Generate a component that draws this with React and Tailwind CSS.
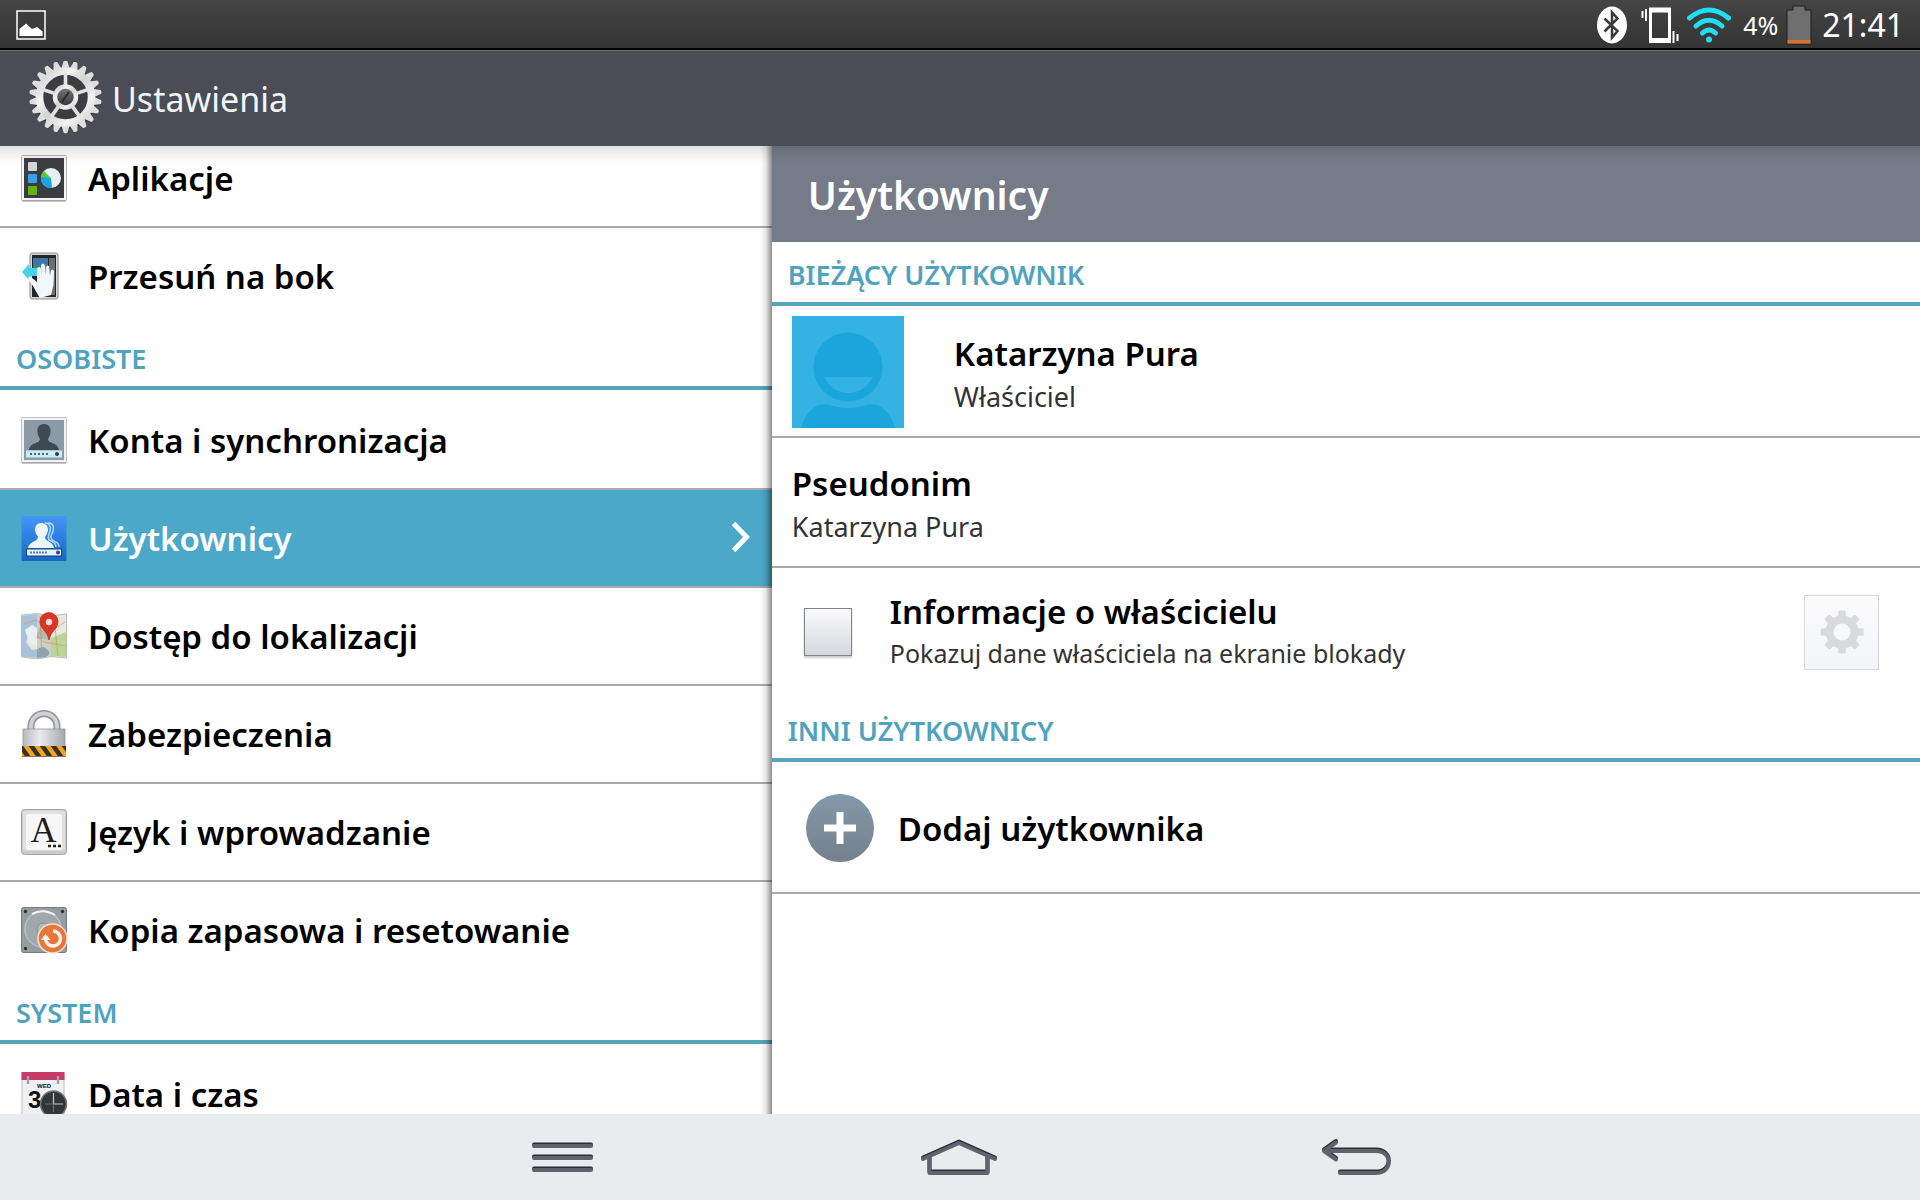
const HEADER_TEETH = Array.from({ length: 22 }, (_, i) => (i * 360) / 22)
const SPOKES = [0, 72, 144, 216, 288]
const SMALL_TEETH = [0, 45, 90, 135, 180, 225, 270, 315]

function SettingsLogo() {
  return (
    <svg className="w-19 h-19 shrink-0" viewBox="0 0 76 76" aria-hidden="true">
      <defs>
        <linearGradient id="metal" x1="0" y1="0" x2="1" y2="1">
          <stop offset="0" stopColor="#c9c9c9" />
          <stop offset="0.3" stopColor="#f4f4f4" />
          <stop offset="0.5" stopColor="#d2d2d2" />
          <stop offset="0.75" stopColor="#f2f2f2" />
          <stop offset="1" stopColor="#d0d0d0" />
        </linearGradient>
        <linearGradient id="screw" x1="0" y1="0" x2="0" y2="1">
          <stop offset="0" stopColor="#7b7b7b" />
          <stop offset="1" stopColor="#333333" />
        </linearGradient>
      </defs>
      <circle cx="37.5" cy="37.5" r="31" fill="#24262a" opacity="0.5" />
      <g fill="#25272b" opacity="0.5">
        {HEADER_TEETH.map((a) => (
          <path key={a} d="M33 12L35.6 1.5Q37.5 .5 39.4 1.5L42 12Z" transform={`translate(0 1.5) rotate(${a} 37.5 36)`} />
        ))}
      </g>
      <g fill="#dedede">
        {HEADER_TEETH.map((a) => (
          <path key={a} d="M32.6 10L35.6 .2Q37.5 -1 39.4 .2L42.4 10Z" transform={`rotate(${a} 37.5 36)`} />
        ))}
      </g>
      <circle cx="37.5" cy="36" r="26" fill="#3c3d40" />
      <circle cx="37.5" cy="36" r="26" fill="none" stroke="url(#metal)" strokeWidth="7.5" />
      <g fill="#e2e2e2">
        {SPOKES.map((a) => (
          <rect key={a} x="35.7" y="12" width="3.6" height="14" transform={`rotate(${a} 37.5 36)`} />
        ))}
      </g>
      <circle cx="37.5" cy="36" r="10.5" fill="url(#screw)" stroke="url(#metal)" strokeWidth="4.5" />
      <path d="M34 41L41 31" stroke="#2b2b2b" strokeWidth="2" />
    </svg>
  )
}

function AppsIcon() {
  return (
    <>
      <rect x="1.5" y="1.5" width="45" height="45" rx="1" fill="#f4f4f4" stroke="#b5b5b5" />
      <path d="M2 47h44" stroke="#8f8f8f" />
      <rect x="4" y="4" width="40" height="40" fill="#3b3c3f" />
      <rect x="8" y="8" width="9" height="9" rx="1" fill="#d3d3d8" />
      <rect x="8" y="20" width="9" height="9" rx="1" fill="#35a3ea" />
      <rect x="8" y="32" width="9" height="9" rx="1" fill="#66b010" />
      <circle cx="31" cy="24" r="10" fill="#e9f0f3" />
      <path d="M31 24L21 22A10 10 0 0 0 32 34Z" fill="#1ba3e4" />
      <path d="M31 24L21 23Q21.5 19 24 17Z" fill="#5cc83a" />
    </>
  )
}

function SlideIcon() {
  return (
    <>
      <rect x="10" y="1" width="28" height="46" rx="2" fill="#d5d5d5" stroke="#8c8c8c" />
      <rect x="12" y="3" width="24" height="42" fill="#232527" />
      <path d="M13 6h15v9H13z" fill="#3d77a8" />
      <path d="M13 15h15v8H13z" fill="#4c8a3c" />
      <path d="M29 6h6v37h-6z" fill="#6d6f72" />
      <path d="M2 20L9 12V16H19V24H9V28Z" fill="#45d3ee" />
      <path
        d="M18 43L13 34L8 27Q8 24 11 25L17 30L17 18Q17 15 19 15Q21 15 21 18L21.5 24L21 14Q21 11.5 23 11.5Q25 12 25 14L26 23L26 15Q27 12.5 29 14L30 24L31 18Q33 16.5 34 19L33.5 33L31 43L20 46Z"
        fill="#f1f8fa"
      />
    </>
  )
}

function AccountIcon() {
  return (
    <>
      <rect x="1.5" y="1.5" width="45" height="45" rx="1" fill="#f1f1f1" stroke="#c2c2c2" />
      <path d="M2 47h44" stroke="#8f8f8f" />
      <rect x="4" y="4" width="40" height="40" fill="#8b9ba5" />
      <path
        d="M24 8C19 8 17 12 17.5 16C17.5 19 19 21 20 23C20 28 10 26 9 34H39C38 26 28 28 28 23C29 21 30.5 19 30.5 16C31 12 29 8 24 8Z"
        fill="#3e4a52"
      />
      <rect x="6" y="34.5" width="36" height="7" fill="#c9edf7" />
      <path d="M10 38h18" stroke="#51626b" strokeWidth="2" strokeDasharray="2 2" />
      <circle cx="37" cy="38" r="2" fill="#2b3c46" />
    </>
  )
}

function UsersIcon() {
  return (
    <>
      <defs>
        <linearGradient id="usersBg" x1="0" y1="0" x2="0" y2="1">
          <stop offset="0" stopColor="#4296f8" />
          <stop offset="1" stopColor="#1768c4" />
        </linearGradient>
      </defs>
      <rect x="1.5" y="2" width="45" height="45" rx="1" fill="url(#usersBg)" />
      <g fill="none" stroke="#b9d6f8" strokeWidth="1.5">
        <path d="M25 9C30 9 31 13 30 17C29 21 27 23 29 26C33 28 36 29 36 33" />
        <path d="M28 9C34 9 34 14 33 17C31 22 30 23 32 26C36 28 39 29 39 33" />
      </g>
      <path
        d="M21 9C17 9 15 12 15 16C15 19 17 21 18 23C18 28 9 27 8 34H34C33 27 25 28 25 23C26 21 28 19 28 16C28 12 26 9 21 9Z"
        fill="#eaf7fb"
      />
      <rect x="6.5" y="35" width="35" height="7" fill="#e6f2fa" stroke="#123f78" />
      <path d="M10 38.5h17" stroke="#5f7da0" strokeWidth="2" strokeDasharray="2 1" />
      <circle cx="38" cy="38.5" r="2" fill="#274c77" />
    </>
  )
}

function MapIcon() {
  return (
    <>
      <path d="M1.5 3L17 1.5L31 4L46.5 2V46L31 44.5L17 47L1.5 45Z" fill="#eae8da" stroke="#bcbcb6" />
      <path d="M2 4L17 2V24L9 22L6 30L12 38L17 37V46L2 44.5Z" fill="#a9c2dc" />
      <path d="M5 18L12 13L17 16V34L9 30Z" fill="#e9eff2" />
      <path d="M17 2L31 5V44L17 46Z" fill="#cfcfc4" />
      <path d="M31 26L46 20V45L31 44Z" fill="#b9d69a" />
      <path d="M17 38Q22 32 28 38Q31 42 26 45L17 46Z" fill="#8ea3b1" />
      <path d="M4 12L16 8L30 20L45 10M17 24L24 30L45 34M20 4L22 44M34 5L38 44" fill="none" stroke="#cf9a55" strokeWidth="0.7" />
      <path d="M30 28L20 14L16 26Z" fill="#8a8a80" opacity="0.35" />
      <path d="M29 28C28 20 20 17 20 9.5A9 9 0 0 1 38 9.5C38 17 30 20 29 28Z" fill="#dd3426" stroke="#a3251c" strokeWidth="0.7" />
      <circle cx="29" cy="10" r="3.2" fill="#f9dcd8" />
    </>
  )
}

function LockIcon() {
  return (
    <>
      <defs>
        <linearGradient id="lockBody" x1="0" y1="0" x2="1" y2="0">
          <stop offset="0" stopColor="#b7b9bd" />
          <stop offset="0.4" stopColor="#ececee" />
          <stop offset="1" stopColor="#a4a7ac" />
        </linearGradient>
        <clipPath id="lockBand">
          <rect x="2" y="36" width="44" height="10" />
        </clipPath>
      </defs>
      <path d="M11 22V16A13 12.5 0 0 1 37 16V22" fill="none" stroke="#8f9298" strokeWidth="7" />
      <path d="M11 22V16A13 12.5 0 0 1 37 16V22" fill="none" stroke="#cfd1d5" strokeWidth="4" />
      <rect x="3" y="19" width="42" height="18" fill="url(#lockBody)" stroke="#94969b" strokeWidth="0.8" />
      <rect x="2" y="36" width="44" height="10" fill="#f2a51d" />
      <g clipPath="url(#lockBand)" stroke="#3a3024" strokeWidth="4.5">
        <path d="M-1 34L9 48M10 34L20 48M21 34L31 48M32 34L42 48M43 34L53 48" />
      </g>
      <path d="M2 46.5h44" stroke="#80776b" />
    </>
  )
}

function LanguageIcon() {
  return (
    <>
      <rect x="1.5" y="1.5" width="45" height="45" rx="3" fill="#cccccc" stroke="#a5a5a5" />
      <rect x="3" y="2.5" width="42" height="40" rx="2" fill="#e0e0e0" />
      <rect x="6" y="6" width="36" height="36" rx="2" fill="#f7f7f7" />
      <text x="23.5" y="34" textAnchor="middle" fontFamily="Liberation Serif, serif" fontWeight="400" fontSize="36" fill="#1c1c1c">A</text>
      <path d="M28 38h3M33 38h3M38 38h3" stroke="#222222" strokeWidth="2.5" />
    </>
  )
}

function BackupIcon() {
  return (
    <>
      <rect x="1.5" y="1.5" width="45" height="45" rx="2" fill="#969da1" stroke="#777c80" />
      <circle cx="23" cy="23" r="18" fill="#a1a8ac" stroke="#b9bfc2" strokeWidth="1.5" />
      <path d="M12 8Q23 2 35 9" fill="none" stroke="#f3f6f7" strokeWidth="2" />
      <circle cx="23" cy="23" r="6" fill="#b4b9bc" stroke="#858b8f" />
      <g fill="#2e3234">
        <circle cx="5.5" cy="5.5" r="1.7" />
        <circle cx="42.5" cy="5.5" r="1.7" />
        <circle cx="5.5" cy="42.5" r="1.7" />
      </g>
      <circle cx="32.5" cy="32.5" r="14.5" fill="#e8753a" stroke="#f6e0d2" strokeWidth="1.5" />
      <path d="M33 25A7.5 7.5 0 1 1 25.5 33" fill="none" stroke="#fdf3ec" strokeWidth="3.5" />
      <path d="M21 34L25.5 28L30.5 34Z" fill="#fdf3ec" />
    </>
  )
}

function DateIcon() {
  return (
    <>
      <rect x="2" y="4" width="42" height="44" fill="#eff0f2" stroke="#bdbec1" />
      <rect x="1.5" y="2" width="43" height="8" fill="#c63c68" />
      <path d="M8 6v8M38 6v8" stroke="#a2a2a6" strokeWidth="2.5" />
      <text x="24" y="18" textAnchor="middle" fontFamily="Liberation Sans, sans-serif" fontWeight="700" fontSize="6" fill="#111111">WED</text>
      <text x="8" y="38" fontFamily="Liberation Sans, sans-serif" fontWeight="700" fontSize="24" fill="#111111">3</text>
      <circle cx="33.5" cy="34" r="13" fill="#343538" stroke="#77787c" strokeWidth="1.5" />
      <path d="M33.5 23V34H43" fill="none" stroke="#c3c5c8" strokeWidth="1.2" />
      <path d="M33.5 34V42M33.5 34H25" fill="none" stroke="#6f7175" />
    </>
  )
}

const menu = [
  {
    items: [
      { label: 'Aplikacje', Icon: AppsIcon },
      { label: 'Przesuń na bok', Icon: SlideIcon },
    ],
  },
  {
    title: 'OSOBISTE',
    items: [
      { label: 'Konta i synchronizacja', Icon: AccountIcon },
      { label: 'Użytkownicy', Icon: UsersIcon, active: true },
      { label: 'Dostęp do lokalizacji', Icon: MapIcon },
      { label: 'Zabezpieczenia', Icon: LockIcon },
      { label: 'Język i wprowadzanie', Icon: LanguageIcon },
      { label: 'Kopia zapasowa i resetowanie', Icon: BackupIcon },
    ],
  },
  {
    title: 'SYSTEM',
    items: [{ label: 'Data i czas', Icon: DateIcon }],
  },
]

function StatusBar() {
  return (
    <div className="h-[50px] shrink-0 flex items-center justify-between pt-0.5 px-4 bg-linear-to-b from-[#454545] to-[#343434] border-b-2 border-black text-white">
      <svg className="w-[31px] h-[31px]" viewBox="0 0 31 31" aria-hidden="true">
        <rect x="1" y="1" width="28" height="28" fill="#3d3d3d" stroke="#ffffff" strokeWidth="1.5" />
        <path d="M3.5 26V19L10 13.5L16 19L21 17L26.5 21.5V26Z" fill="#ffffff" />
      </svg>
      <div className="flex items-center gap-2">
        <svg className="w-9 h-[38px]" viewBox="0 0 36 38" aria-label="Bluetooth" role="img">
          <ellipse cx="15" cy="19" rx="15" ry="18.5" fill="#ffffff" />
          <path d="M7.5 12.5L20.5 25L15 31.5V6.5L20.5 12.5L7.5 25.5" fill="none" stroke="#3a3a3a" strokeWidth="2.5" />
        </svg>
        <svg className="w-[38px] h-[38px]" viewBox="0 0 38 38" aria-label="Wibracje" role="img">
          <rect x="9.5" y="3.5" width="19" height="31" fill="none" stroke="#ffffff" strokeWidth="3" />
          <path d="M8 4h22M8 34.5h22" stroke="#ffffff" strokeWidth="5" />
          <path d="M1.500 5v7M5 3v12M32.500 25v12M36.500 28v7" stroke="#ffffff" strokeWidth="2" />
        </svg>
        <svg className="w-[44px] h-[38px]" viewBox="0 0 44 38" aria-label="Wi-Fi" role="img">
          <g fill="none" stroke="#1fe0f2" strokeWidth="5" strokeLinecap="round">
            <path d="M2.5 12Q22 -4 41.5 12" />
            <path d="M9 20Q22 8.5 35 20" />
            <path d="M15.5 27Q22 21 28.5 27" />
          </g>
          <circle cx="22" cy="33.5" r="3" fill="#1fe0f2" />
        </svg>
        <span className="pl-1 text-[25px] leading-8">4%</span>
        <svg className="w-7 h-10" viewBox="0 0 28 40" aria-label="Bateria" role="img">
          <path d="M1 5H7V1H19V5H25V39H1Z" fill="#6f6f6f" stroke="#1c1c1c" />
          <rect x="1.5" y="35" width="23" height="3.5" fill="#d9722c" />
        </svg>
        <span className="text-[32px] leading-8">21:41</span>
      </div>
    </div>
  )
}

function SectionTitle({ children }) {
  return (
    <h2 className="h-16 mb-0.5 pt-1.5 pl-4 flex items-center border-b-4 border-[#58a5bb] text-[27px] font-semibold text-[#4fa3be]">
      {children}
    </h2>
  )
}

function MenuItem({ item, last }) {
  const { label, Icon, active } = item
  return (
    <li>
      <a
        href="#"
        className={`h-[98px] flex items-center gap-5 px-5 border-b-2 text-[33px] font-semibold
          ${last ? 'border-transparent' : 'border-[#ababab]'}
          ${active ? 'bg-[#4ba8c9] text-white' : 'text-black'}`}
      >
        <svg className="w-12 h-12 shrink-0" viewBox="0 0 48 48" aria-hidden="true">
          <Icon />
        </svg>
        <span className="flex-1 pt-0.5 truncate">{label}</span>
        {active && (
          <svg className="w-5 h-8" viewBox="0 0 20 32" aria-hidden="true">
            <path d="M1.500 1.500L14.500 15L1.500 28.500" fill="none" stroke="#ffffff" strokeWidth="5" />
          </svg>
        )}
      </a>
    </li>
  )
}

function Sidebar() {
  return (
    <nav className="relative w-[40.2%] shrink-0 overflow-hidden bg-white">
      {/* list is scrolled down by a few pixels */}
      <div className="-mt-4">
        {menu.map(({ title, items }, i) => (
          <section key={i}>
            {title && <SectionTitle>{title}</SectionTitle>}
            <ul>
              {items.map((item, j) => (
                <MenuItem key={item.label} item={item} last={j === items.length - 1} />
              ))}
            </ul>
          </section>
        ))}
      </div>
      <div className="absolute inset-y-0 right-0 w-3 bg-linear-to-r from-transparent via-black/10 to-black/45" />
    </nav>
  )
}

function Avatar() {
  return (
    <svg className="w-28 h-28 shrink-0" viewBox="0 0 112 112" aria-hidden="true">
      <rect width="112" height="112" fill="#34b2e6" />
      <circle cx="56" cy="51" r="34.5" fill="#1aa6da" />
      <path d="M32 61H81Q72 77 56 77Q41 77 32 61Z" fill="#34b2e6" />
      <path d="M9 112Q16 88 35 88Q56 96 77 88Q96 88 103 112Z" fill="#1aa6da" />
    </svg>
  )
}

function Detail() {
  return (
    <main className="flex-1 min-w-0 bg-white">
      <h1 className="h-24 pt-0.5 pl-9 flex items-center bg-[#757b87] text-[39px] font-semibold text-white">Użytkownicy</h1>

      <SectionTitle>BIEŻĄCY UŻYTKOWNIK</SectionTitle>
      <a href="#" className="h-[130px] pl-5 flex items-center gap-[50px] border-b-2 border-[#ababab]">
        <Avatar />
        <span>
          <span className="block text-[33px] leading-[50px] font-semibold text-black">Katarzyna Pura</span>
          <span className="block text-[27px] leading-9 text-[#333333]">Właściciel</span>
        </span>
      </a>
      <a href="#" className="h-[130px] pl-5 flex items-center border-b-2 border-[#ababab]">
        <span>
          <span className="block text-[33px] leading-[50px] font-semibold text-black">Pseudonim</span>
          <span className="block text-[27px] leading-9 text-[#333333]">Katarzyna Pura</span>
        </span>
      </a>
      <div className="h-[130px] pl-8 pr-[41px] flex items-center gap-[38px] border-b-2 border-transparent">
        <input
          id="owner-info"
          type="checkbox"
          className="appearance-none w-12 h-12 shrink-0 border border-[#7d8084] bg-linear-to-b from-[#fbfbfb] to-[#d5d8de] shadow-[0_2px_2px_rgba(0,0,0,0.2)]"
        />
        <label htmlFor="owner-info" className="flex-1 pb-1">
          <span className="block text-[33px] leading-[46px] font-semibold text-black">Informacje o właścicielu</span>
          <span className="block text-[25px] leading-9 text-[#333333]">Pokazuj dane właściciela na ekranie blokady</span>
        </label>
        <button
          type="button"
          disabled
          aria-label="Ustawienia informacji o właścicielu"
          className="w-[75px] h-[75px] flex items-center justify-center border border-[#d6d8db] bg-linear-to-b from-[#fafafa] to-[#f4f5f9]"
        >
          <svg className="w-11 h-11" viewBox="0 0 44 44">
            <g fill="#d9dadc">
              {SMALL_TEETH.map((a) => (
                <rect key={a} x="18.2" y="0.5" width="7.600" height="10" rx="1.5" transform={`rotate(${a} 22 22)`} />
              ))}
            </g>
            <circle cx="22" cy="22" r="12.5" fill="none" stroke="#d9dadc" strokeWidth="8" />
          </svg>
        </button>
      </div>

      <SectionTitle>INNI UŻYTKOWNICY</SectionTitle>
      <button type="button" className="w-full h-[130px] pl-8 flex items-center gap-[22px] border-b-2 border-[#ababab] text-[33px] font-semibold text-black">
        <svg className="w-18 h-18" viewBox="0 0 72 72" aria-hidden="true">
          <defs>
            <linearGradient id="add" x1="0" y1="0" x2="0" y2="1">
              <stop offset="0" stopColor="#8399aa" />
              <stop offset="1" stopColor="#74808c" />
            </linearGradient>
          </defs>
          <circle cx="36" cy="36" r="34" fill="url(#add)" />
          <path d="M20 36H52M36 20V52" stroke="#ffffff" strokeWidth="7" />
        </svg>
        <span className="pt-0.5">Dodaj użytkownika</span>
      </button>
    </main>
  )
}

function NavButton({ label, children }) {
  return (
    <button type="button" aria-label={label} className="w-[20.7%] h-full flex items-center justify-center">
      <svg className="w-20 h-10" viewBox="0 0 80 40">
        <g fill="none" strokeLinecap="round" strokeLinejoin="round">
          <g stroke="#2c2e34" strokeWidth="4">{children}</g>
          <g stroke="#60636e" strokeWidth="4" transform="translate(0 1.5)">{children}</g>
        </g>
      </svg>
    </button>
  )
}

export default function App() {
  return (
    <div className="h-screen flex flex-col overflow-hidden font-['Noto_Sans',sans-serif]">
      <StatusBar />
      <header className="h-24 shrink-0 pl-7 flex items-center gap-2 bg-[#4a4d55] border-t border-[#6a6c73] text-[34px] text-[#f3f4f8]">
        <SettingsLogo />
        <span className="pt-0.5">Ustawienia</span>
      </header>
      <div className="relative flex-1 min-h-0 flex">
        <Sidebar />
        <Detail />
        <div className="absolute inset-x-0 top-0 h-4 bg-linear-to-b from-black/12 to-transparent pointer-events-none" />
      </div>
      <footer className="h-[86px] shrink-0 flex justify-center bg-[#e9ecef]">
        <NavButton label="Menu">
          <path d="M11 7.5H68M11 19.5H68M11 31.5H68" />
        </NavButton>
        <NavButton label="Ekran główny">
          <path d="M3 20.5L39 4.5L75 20.5M9.5 19V34.5H67.5V19" />
        </NavButton>
        <NavButton label="Wstecz">
          <path d="M19 4L7 12.5L19 21M7 12.5H59C76 12.5 76 34.5 59 34.5H23" />
        </NavButton>
      </footer>
    </div>
  )
}
